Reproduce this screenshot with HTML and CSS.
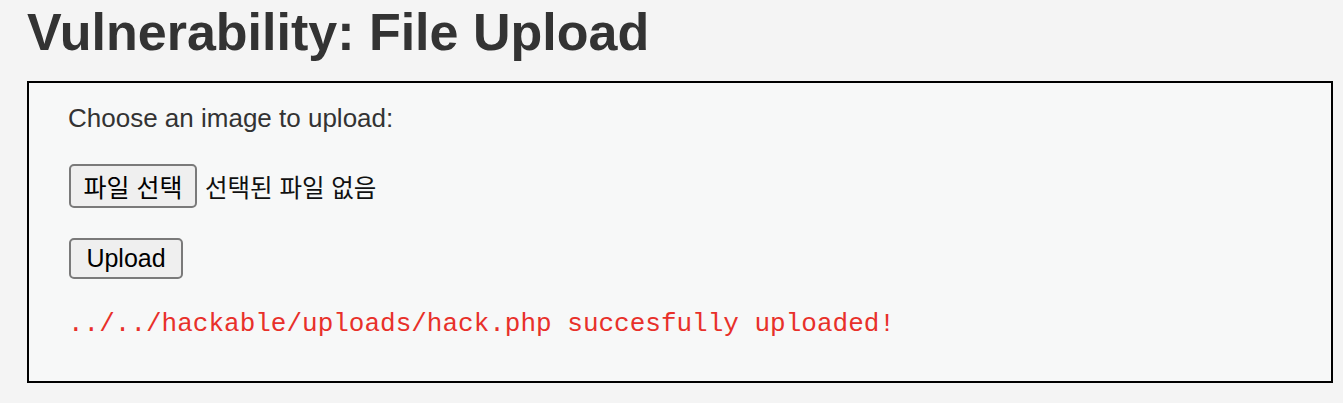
FILE: index.html
```html
<!DOCTYPE html>
<html lang="ko">
<head>
<meta charset="utf-8">
<title>Vulnerability: File Upload</title>
<link rel="stylesheet" href="styles.css">
</head>
<body>
<div class="page">
  <h1 class="title">Vulnerability: File Upload</h1>
  <div class="vulnerable-code">
    <form class="upload-form">
      <p class="label">Choose an image to upload:</p>
      <div class="file-row">
        <button type="button" class="btn file-btn">파일 선택</button>
        <span class="file-status">선택된 파일 없음</span>
      </div>
      <button type="button" class="btn upload-btn">Upload</button>
    </form>
    <pre class="result">../../hackable/uploads/hack.php succesfully uploaded!</pre>
  </div>
</div>
</body>
</html>
```

FILE: styles.css
```css
html, body {
  margin: 0;
  padding: 0;
  background: #f4f4f4;
}

.page {
  padding: 2px 10px 20px 27px;
  font-family: "Liberation Sans", Arial, "Noto Sans CJK KR", sans-serif;
  color: #333;
}

.title {
  margin: 0 0 19px 0;
  font-size: 52px;
  font-weight: bold;
  color: #333;
  line-height: normal;
}

.vulnerable-code {
  border: 2px solid #000;
  background: #f7f8f8;
  padding: 20px 39px 42px 39px;
}

.upload-form {
  display: flex;
  flex-direction: column;
  align-items: flex-start;
  gap: 30px;
}

.label {
  margin: 0;
  font-size: 26px;
  color: #333;
}

.file-row {
  display: flex;
  align-items: center;
  gap: 8px;
}

.btn {
  box-sizing: border-box;
  background: #efefef;
  border: 2px solid #7a7a7a;
  border-radius: 5px;
  color: #000;
  padding: 0;
  margin: 0 0 0 1px;
  display: flex;
  align-items: center;
  justify-content: center;
}

.file-btn {
  width: 128px;
  height: 44px;
  font-family: "Liberation Sans", "Noto Sans CJK KR", sans-serif;
  font-size: 25px;
}

.upload-btn {
  width: 114px;
  height: 41px;
  font-family: "Liberation Sans", Arial, sans-serif;
  font-size: 25px;
}

.file-status {
  font-family: "Liberation Sans", "Noto Sans CJK KR", sans-serif;
  font-size: 24.5px;
  color: #111;
}

.result {
  margin: 30px 0 0 0;
  font-family: "Liberation Mono", "Courier New", monospace;
  font-size: 26px;
  color: #e8302a;
}
```
